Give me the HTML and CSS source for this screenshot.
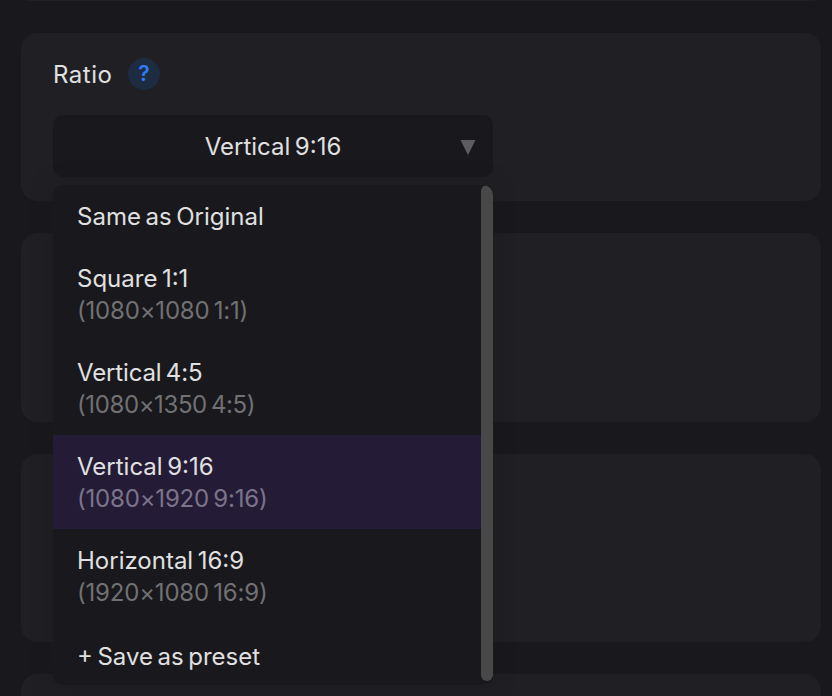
FILE: index.html
```html
<!DOCTYPE html>
<html lang="en">
<head>
<meta charset="utf-8">
<title>Ratio</title>
<link rel="stylesheet" href="styles.css">
</head>
<body>
<div class="panel">
  <section class="card card-prev"></section>
  <section class="card card-ratio">
    <div class="label"><span class="label-text">Ratio</span><span class="help">?</span></div>
    <div class="select">
      <div class="select-box">
        <span class="select-value">Vertical 9:16</span>
        <svg class="arrow" width="16" height="16" viewBox="0 0 16 16"><path d="M.5 1h15L8 16z"/></svg>
      </div>
      <div class="menu">
        <div class="options">
          <div class="option"><span>Same as Original</span></div>
          <div class="option"><span>Square 1:1</span><small>(1080×1080 1:1)</small></div>
          <div class="option tight"><span>Vertical 4:5</span><small>(1080×1350 4:5)</small></div>
          <div class="option selected"><span>Vertical 9:16</span><small>(1080×1920 9:16)</small></div>
          <div class="option"><span>Horizontal 16:9</span><small>(1920×1080 16:9)</small></div>
          <div class="option save"><span>+ Save as preset</span></div>
        </div>
        <div class="scrollbar"></div>
      </div>
    </div>
  </section>
  <section class="card card-second"></section>
  <section class="card card-third"></section>
  <section class="card card-last"></section>
</div>
</body>
</html>
```

FILE: styles.css
```css
body {
  margin: 0;
  background: #19181c;
  color: #e0e0e0;
  font: 24px/32px Inter, sans-serif;
  word-spacing: -2.2px;
}
.panel {
  display: flex;
  flex-direction: column;
  gap: 32px;
  box-sizing: border-box;
  height: 696px;
  overflow: hidden;
  padding: 0 11px 0 21px;
}
.card {
  box-sizing: border-box;
  flex: none;
  border-radius: 16px;
  background: #201f23;
}
.card-prev {
  height: 16px;
  margin-top: -15px;
}
.card-ratio {
  height: 168px;
  padding: 25px 32px 0;
}
.card-second { height: 189px; }
.card-third { height: 188px; }
.card-last {
  height: 22px;
  border-radius: 16px 16px 0 0;
}

.label {
  display: flex;
  align-items: center;
  gap: 16px;
  height: 32px;
}
.label-text {
  width: 59px;
  padding-top: 2px;
  letter-spacing: .5px;
}
.help {
  width: 32px;
  border-radius: 50%;
  background: #1e2c42;
  color: #2f7bf6;
  font-size: 21px;
  font-weight: 600;
  text-align: center;
}
.select {
  position: relative;
  width: 440px;
  margin-top: 25px;
}
.select-box {
  display: flex;
  align-items: center;
  box-sizing: border-box;
  height: 62px;
  padding: 1px 17px 0 24px;
  border-radius: 10px;
  background: #19181c;
}
.select-value {
  flex: 1;
  padding: 1px 0 0 9px;
  text-align: center;
}
.arrow { fill: #5d5d5f; }

.menu {
  position: absolute;
  top: 70px;
  left: 0;
  display: flex;
  width: 440px;
  height: 500px;
  overflow: hidden;
  border-radius: 10px;
  background: #19181c;
  box-shadow: 0 0 20px rgba(25, 25, 25, .5);
}
.options { flex: 1; }
.option {
  display: flex;
  flex-direction: column;
  align-items: flex-start;
  padding: 16px 24px 14px;
  white-space: nowrap;
}
.option small {
  color: #717173;
  font-size: 24px;
  letter-spacing: -.2px;
}
.tight span { letter-spacing: -.15px; }
.tight small { letter-spacing: -.4px; }
.selected { background: #241b36; }
.selected small { color: #7b748a; }
.save {
  padding-top: 18px;
  padding-bottom: 0;
}
.scrollbar {
  width: 12px;
  height: 496px;
  border-radius: 6px;
  background: #484849;
}
```
